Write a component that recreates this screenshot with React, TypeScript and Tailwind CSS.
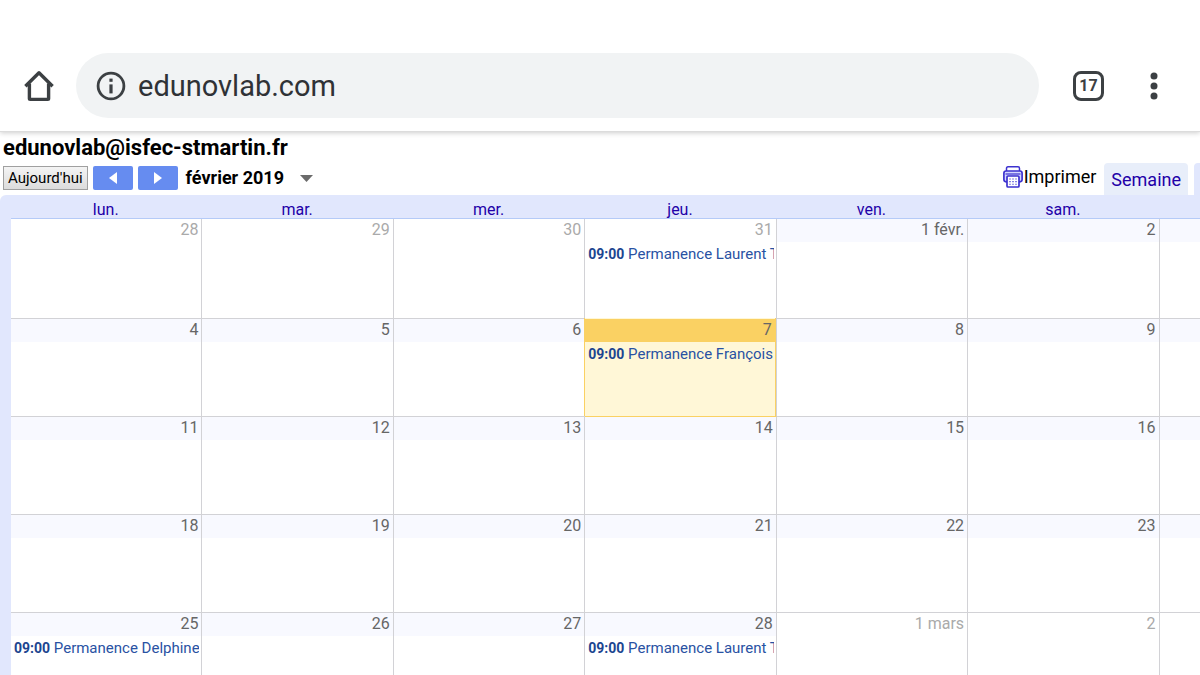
import React from "react";

type Day = {
  label: string;
  muted?: boolean;
  today?: boolean;
  event?: string;
};

const weekdays = ["lun.", "mar.", "mer.", "jeu.", "ven.", "sam.", "dim."];

const weeks: Day[][] = [
  [
    { label: "28", muted: true },
    { label: "29", muted: true },
    { label: "30", muted: true },
    { label: "31", muted: true, event: "Permanence Laurent T" },
    { label: "1 févr." },
    { label: "2" },
    { label: "3" },
  ],
  [
    { label: "4" },
    { label: "5" },
    { label: "6" },
    { label: "7", today: true, event: "Permanence François" },
    { label: "8" },
    { label: "9" },
    { label: "10" },
  ],
  ["11", "12", "13", "14", "15", "16", "17"].map((label) => ({ label })),
  ["18", "19", "20", "21", "22", "23", "24"].map((label) => ({ label })),
  [
    { label: "25", event: "Permanence Delphine" },
    { label: "26" },
    { label: "27" },
    { label: "28", event: "Permanence Laurent T" },
    { label: "1 mars", muted: true },
    { label: "2", muted: true },
    { label: "3", muted: true },
  ],
];

function HomeIcon() {
  return (
    <svg className="h-8 w-8" viewBox="0 0 32 32" fill="none" stroke="#3c4043" strokeWidth="3.4" aria-hidden="true">
      <path d="M2.4 16.2 16 2.8l13.6 13.4" strokeLinejoin="round" />
      <path d="M6.4 13.5V28.6q0 .8.8.8h17.6q.8 0 .8-.8V13.5" />
    </svg>
  );
}

function InfoIcon() {
  return (
    <svg className="h-[30px] w-[30px] shrink-0" viewBox="0 0 30 30" aria-hidden="true">
      <circle cx="15" cy="15" r="12.9" fill="none" stroke="#3c4043" strokeWidth="2.8" />
      <rect x="13.4" y="7.6" width="3.2" height="3.2" fill="#3c4043" />
      <rect x="13.4" y="13.4" width="3.2" height="9" fill="#3c4043" />
    </svg>
  );
}

function PrintIcon() {
  return (
    <svg className="h-[22px] w-5" viewBox="0 0 20 22" aria-hidden="true">
      <path d="M3.5 5.5V2.500q0-1.700 1.500-1.700h10q1.500 0 1.500 1.700v3" fill="#fff" stroke="#3d32cf" strokeWidth="1.500" />
      <rect x=".9" y="5" width="18.200" height="10.800" rx="2.200" fill="#d5d8ff" stroke="#3d32cf" strokeWidth="1.700" />
      <path d="M2.500 8h15" stroke="#3d32cf" strokeWidth="1.200" />
      <rect x="4" y="10" width="12" height="11" rx="1" fill="#fff" stroke="#3d32cf" strokeWidth="1.700" />
      <path d="M6 13h8M6 15.600h8M6 18.200h8" stroke="#8580e4" strokeWidth="1.100" strokeDasharray="2 1" />
    </svg>
  );
}

function BrowserBar() {
  return (
    <header className="relative z-10 flex items-center border-b border-[#dcdcdc] bg-white pt-[53px] pb-[13px] pl-[23px] shadow-[0_1px_5px_rgba(0,0,0,0.2)]">
      <button type="button" aria-label="Accueil" className="shrink-0">
        <HomeIcon />
      </button>
      <div className="ml-[21px] flex h-[65px] min-w-0 flex-1 items-center gap-3 rounded-full bg-[#f1f3f4] pl-5">
        <InfoIcon />
        <input
          type="text"
          aria-label="Adresse"
          defaultValue="edunovlab.com"
          className="min-w-0 flex-1 bg-transparent text-[29px] leading-9 text-[#2f3236] outline-none"
        />
      </div>
      <button
        type="button"
        aria-label="17 onglets ouverts"
        className="ml-[34px] flex h-[30px] w-[31px] shrink-0 items-center justify-center rounded-lg border-3 border-[#3c4043] text-base font-bold text-[#3c4043]"
      >
        17
      </button>
      <button type="button" aria-label="Menu" className="mr-[25px] ml-[35px] shrink-0">
        <svg className="h-[30px] w-9" viewBox="0 0 36 30" fill="#3c4043" aria-hidden="true">
          <circle cx="15" cy="5" r="3.500" />
          <circle cx="15" cy="15" r="3.500" />
          <circle cx="15" cy="25" r="3.500" />
        </svg>
      </button>
    </header>
  );
}

function Toolbar() {
  return (
    <div className="flex items-end pl-[3px]">
      <div className="flex items-center pb-[5px]">
        <button
          type="button"
          className="h-6 border border-[#a0a0a0] bg-linear-to-b from-[#f4f4f4] to-[#dcdcdc] px-1 text-[15px] leading-5 whitespace-nowrap text-black"
        >
          Aujourd'hui
        </button>
        <button
          type="button"
          aria-label="Mois précédent"
          className="ml-[5px] flex h-6 w-10 items-center justify-center rounded-xs bg-[#668cf0]"
        >
          <svg className="h-3 w-2" viewBox="0 0 8 12" fill="#fff" aria-hidden="true">
            <path d="M8 0v12L0 6z" />
          </svg>
        </button>
        <button
          type="button"
          aria-label="Mois suivant"
          className="ml-[5px] flex h-6 w-10 items-center justify-center rounded-xs bg-[#668cf0]"
        >
          <svg className="h-3 w-2" viewBox="0 0 8 12" fill="#fff" aria-hidden="true">
            <path d="M0 0v12l8-6z" />
          </svg>
        </button>
        <button type="button" className="ml-2 flex items-center gap-4 text-lg leading-6 font-bold text-black">
          février 2019
          <svg className="h-[7px] w-[13px]" viewBox="0 0 13 7" fill="#6b6b6b" aria-hidden="true">
            <path d="M0 0h13L6.500 7z" />
          </svg>
        </button>
      </div>
      <div className="-mr-[74px] ml-auto flex items-end">
        <a href="#imprimer" className="flex items-center gap-px pb-[6px] text-lg leading-6 text-black">
          <PrintIcon />
          Imprimer
        </a>
        <div className="ml-2 flex gap-[6px]">
          <button type="button" className="h-8 rounded-t bg-[#e8eefa] px-[7px] pt-[2px] text-lg text-[#2200a8]">
            Semaine
          </button>
          <button type="button" className="h-8 w-20 rounded-t bg-[#e1e7fd] text-lg text-[#2200a8]">
            Mois
          </button>
        </div>
      </div>
    </div>
  );
}

function DayCell({ day }: { day: Day }) {
  const head = day.today
    ? "bg-[#fad163] text-[#666]"
    : day.muted
      ? "bg-white text-[#aaa]"
      : "bg-[#f8f9ff] text-[#666]";
  return (
    <td
      className={
        day.today
          ? "border-r border-b border-r-[#d2d2d6] border-b-[#fad163] p-0 align-top"
          : "border-r border-b border-[#d2d2d6] p-0 align-top"
      }
    >
      <div className={day.today ? "-mt-px -ml-px h-[98px] border-x border-[#fad163] bg-[#fff7d7] pt-px" : ""}>
        <div className={`h-[23px] pr-[3px] text-right leading-[22px] ${head}`}>{day.label}</div>
        {day.event && (
          <a
            href="#evenement"
            className="mr-[2px] ml-[3px] block overflow-hidden text-[15px] leading-6 whitespace-nowrap text-[#2952a3]"
          >
            <b className="text-sm text-[#1c4590]">09:00</b> {day.event}
          </a>
        )}
      </div>
    </td>
  );
}

export default function App() {
  return (
    <div className="h-screen overflow-hidden bg-white font-[Roboto,sans-serif]">
      <BrowserBar />
      <main>
        <h1 className="pt-[2px] pb-px pl-[3px] text-[22px] leading-7 font-bold text-black">
          edunovlab@isfec-stmartin.fr
        </h1>
        <Toolbar />
        <div className="overflow-hidden rounded-tl-md bg-[#e1e7fd] pl-[11px]">
          <table className="w-[calc(100%+151px)] table-fixed border-separate border-spacing-0 text-base">
            <thead>
              <tr>
                {weekdays.map((name) => (
                  <th
                    key={name}
                    scope="col"
                    className="h-6 border-b border-[#b5cbf8] p-0 pt-[6px] pr-[2px] text-center leading-4 font-normal text-[#2200a8]"
                  >
                    {name}
                  </th>
                ))}
              </tr>
            </thead>
            <tbody className="bg-white">
              {weeks.map((week, index) => (
                <tr key={index} className="h-[98px] first:h-[100px]">
                  {week.map((day) => (
                    <DayCell key={day.label} day={day} />
                  ))}
                </tr>
              ))}
            </tbody>
          </table>
        </div>
      </main>
    </div>
  );
}
